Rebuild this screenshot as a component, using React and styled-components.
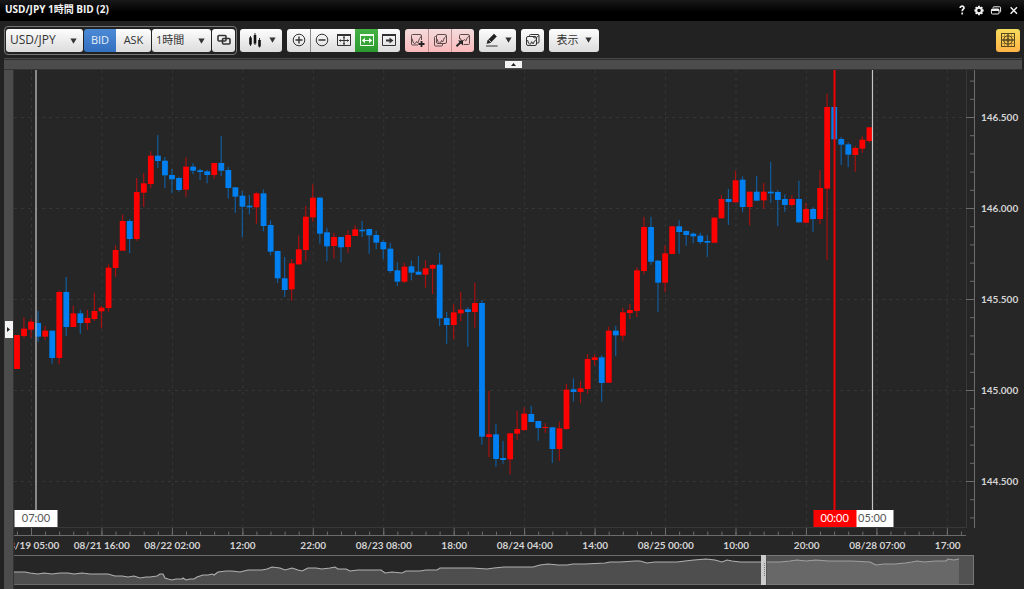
import React from "react";
import styled, { createGlobalStyle, css } from "styled-components";

const uiFont = `"Open Sans", "Noto Sans", "Noto Sans CJK JP", sans-serif`;
const chartFont = `Lato, "Noto Sans CJK JP", sans-serif`;

const GlobalStyle = createGlobalStyle`
  *, *::before, *::after { box-sizing: border-box; }
  body { margin: 0; background: #222; font-family: ${uiFont}; }
  button, select { font-family: inherit; margin: 0; border: 0; padding: 0; cursor: pointer; }
`;

const Window = styled.div`
  display: flex;
  flex-direction: column;
  min-height: 100vh;
  background: #222;
  overflow: hidden;
`;

const TitleBar = styled.header`
  display: flex;
  align-items: center;
  justify-content: space-between;
  height: 21px;
  padding: 0 5px;
  background: linear-gradient(#191919, #000 60%);
  border-bottom: 1px solid #000;
`;

const Title = styled.h1`
  margin: 0;
  padding-bottom: 2px;
  font: bold 10px/16px ${uiFont};
  color: #f4f4f4;
  white-space: nowrap;
`;

const WindowControls = styled.div`
  display: flex;
  gap: 5px;
`;

const WindowButton = styled.button`
  display: flex;
  width: 12px;
  height: 12px;
  background: none;
  color: #eee;
`;

const Toolbar = styled.div`
  display: flex;
  align-items: center;
  gap: 5px;
  height: 37px;
  padding: 1px 4px 0;
`;

const FrameGroup = styled.div`
  display: flex;
  align-items: center;
  gap: 1px;
  height: 29px;
  padding: 0 1px;
  margin-right: -2px;
  border: 1px solid #777;
  border-radius: 4px;
`;

const ButtonGroup = styled.div`
  display: flex;
  height: 23px;
  border-radius: 3px;
  overflow: hidden;
`;

const tones = {
  plain: css`background: linear-gradient(#fdfdfd, #dcdcdc); color: #333;`,
  blue: css`background: linear-gradient(#4b8ad6, #3470c0); color: #e8f0fa;`,
  green: css`background: linear-gradient(#45b045, #2a9a2e); color: #f0fff0;`,
  pink: css`background: linear-gradient(#f3dcdc, #fbb9bc); color: #5c4c4c;`,
  gold: css`background: linear-gradient(#f5dc5c, #ffb347); color: #5a4a20;`,
};

const ToolButton = styled.button`
  display: flex;
  align-items: center;
  justify-content: center;
  gap: 6px;
  width: ${(p) => p.$w}px;
  height: 23px;
  font-size: 11px;
  line-height: 16px;
  white-space: nowrap;
  ${(p) => tones[p.$tone || "plain"]}
  border-radius: ${(p) => (p.$joined ? 0 : 3)}px;

  ${ButtonGroup} > & + & { border-left: 1px solid ${(p) => (p.$tone === "pink" ? "#b98f90" : "#8a8a8a")}; }
`;

const SelectBox = styled.div`
  position: relative;
  width: ${(p) => p.$w}px;
  height: 23px;
`;

const Select = styled.select`
  display: block;
  appearance: none;
  width: 100%;
  height: 100%;
  padding: 0 20px 1px 4px;
  border-radius: 3px;
  font-size: ${(p) => p.$size}px;
  line-height: 16px;
  ${tones.plain}
`;

const SelectArrow = styled.span`
  position: absolute;
  right: 6px;
  top: 9px;
  pointer-events: none;
  display: flex;
`;

const Spacer = styled.div`
  flex: 1;
`;

const TopBand = styled.div`
  display: flex;
  align-items: center;
  justify-content: center;
  height: 12px;
  margin: 0 2px 0 4px;
  border-top: 1px solid #4a4a4a;
  border-bottom: 1px solid #333;
  background: #4c4c4c;
  box-shadow: inset 0 1px 0 #2c2c2c;
`;

const Body = styled.main`
  display: flex;
  flex: 1;
  min-height: 0;
  padding-left: 4px;
`;

const SideBand = styled.div`
  display: flex;
  align-items: center;
  justify-content: center;
  width: 10px;
  background: #4c4c4c;
  border-right: 1px solid #333;
`;

const CollapseTab = styled.button`
  display: flex;
  align-items: center;
  justify-content: center;
  width: ${(p) => (p.$side ? 8 : 17)}px;
  height: ${(p) => (p.$side ? 17 : 7)}px;
  background: #f4f4f4;
  color: #222;
`;

const ChartColumn = styled.div`
  display: flex;
  flex-direction: column;
  flex: 1;
  min-width: 0;
  background: #262626;
`;

const ChartRow = styled.div`
  display: flex;
  flex: 1;
`;

const Plot = styled.div`
  position: relative;
  flex: 1;
  min-width: 0;
`;

const PlotDrawing = styled.svg`
  display: block;
  width: 100%;
  height: 100%;
  min-height: 466px;
`;

const TimeFlag = styled.span`
  position: absolute;
  left: ${(p) => p.$at};
  bottom: 9px;
  width: 43px;
  height: 17px;
  transform: translateX(-50%);
  text-align: center;
  font: 11px/16px ${chartFont};
  background: ${(p) => (p.$alert ? "#f00" : "#fff")};
  color: ${(p) => (p.$alert ? "#fff" : "#555")};
  z-index: ${(p) => (p.$alert ? 1 : 0)};
`;

const axisText = css`
  font: bold 10px/16px ${chartFont};
  color: #d4d4d4;
  white-space: nowrap;
`;

const PriceAxis = styled.ol`
  display: grid;
  grid-template-rows: repeat(5, 1fr);
  width: 49px;
  margin: 0;
  padding: 1px 0 10px 6px;
  list-style: none;
  ${axisText}
`;

const PriceLabel = styled.li`
  display: flex;
  align-items: center;
`;

const TimeAxis = styled.div`
  margin-right: 49px;
  overflow: hidden;
`;

const TimeLabels = styled.ol`
  display: grid;
  grid-template-columns: repeat(14, minmax(0, 1fr));
  height: 19px;
  margin: 0 -8px 0 -18px;
  padding: 1px 0 0;
  list-style: none;
  ${axisText}
`;

const TimeLabel = styled.li`
  display: flex;
  justify-content: center;
`;

const Navigator = styled.div`
  height: 30px;
  margin: 0 50px 4px 0;
`;

const NavigatorDrawing = styled.svg`
  display: block;
  width: 100%;
  height: 100%;
`;

/* Each candle: direction, high, body top, body bottom, low (thirds of a plot unit). */
const candles = [
  ["u", 1005, 1005, 1107, 1107], ["u", 952, 986, 1008, 1015], ["u", 956, 965, 989, 1013],
  ["d", 933, 969, 1010, 1025], ["u", 978, 992, 1010, 1020], ["d", 992, 992, 1074, 1091],
  ["u", 872, 876, 1074, 1093], ["d", 831, 876, 981, 1008], ["u", 917, 940, 981, 981],
  ["d", 929, 940, 969, 1001], ["u", 930, 954, 969, 989], ["u", 878, 933, 957, 963],
  ["u", 917, 923, 934, 985], ["u", 793, 803, 924, 935], ["u", 736, 750, 804, 830],
  ["u", 644, 663, 752, 752], ["d", 658, 663, 717, 760], ["u", 534, 576, 717, 722],
  ["u", 520, 550, 578, 621], ["u", 454, 467, 552, 564], ["d", 405, 467, 483, 504],
  ["d", 471, 482, 526, 564], ["d", 507, 525, 538, 580], ["d", 530, 534, 570, 575],
  ["u", 472, 500, 569, 590], ["d", 490, 500, 512, 523], ["d", 506, 511, 516, 540],
  ["d", 510, 514, 525, 550], ["u", 489, 489, 525, 536], ["d", 408, 489, 512, 528],
  ["d", 501, 510, 564, 596], ["d", 561, 562, 590, 638], ["d", 573, 587, 620, 712],
  ["d", 585, 617, 622, 643], ["u", 577, 580, 622, 671], ["d", 568, 580, 678, 694],
  ["d", 661, 675, 755, 766], ["d", 752, 753, 835, 849], ["d", 771, 835, 870, 891],
  ["u", 777, 790, 868, 902], ["u", 706, 748, 793, 795], ["u", 618, 650, 750, 782],
  ["u", 553, 593, 652, 666], ["d", 591, 593, 701, 731], ["d", 683, 697, 739, 784],
  ["u", 698, 711, 738, 775], ["d", 711, 711, 742, 787], ["u", 691, 705, 741, 758],
  ["u", 676, 688, 708, 708], ["d", 663, 689, 694, 711], ["d", 686, 687, 706, 761],
  ["d", 692, 705, 728, 748], ["d", 721, 726, 748, 778], ["d", 728, 746, 813, 819],
  ["d", 787, 811, 845, 858], ["u", 788, 800, 845, 849], ["d", 782, 799, 818, 841],
  ["d", 768, 815, 824, 824], ["u", 781, 805, 824, 863], ["u", 792, 795, 806, 882],
  ["d", 758, 794, 955, 978], ["d", 935, 954, 975, 1031], ["u", 913, 937, 975, 1018],
  ["u", 876, 929, 940, 964], ["d", 922, 928, 936, 1040], ["u", 848, 909, 936, 983],
  ["d", 900, 909, 1310, 1334], ["u", 1173, 1303, 1311, 1372], ["d", 1273, 1303, 1377, 1400],
  ["d", 1323, 1374, 1380, 1391], ["u", 1299, 1300, 1378, 1423], ["u", 1233, 1287, 1301, 1320],
  ["u", 1222, 1241, 1290, 1293], ["d", 1217, 1242, 1266, 1266], ["d", 1262, 1263, 1284, 1322],
  ["u", 1270, 1281, 1284, 1298], ["d", 1281, 1282, 1347, 1389], ["u", 1265, 1285, 1347, 1382],
  ["u", 1152, 1169, 1287, 1289], ["d", 1135, 1168, 1176, 1205], ["u", 1142, 1165, 1176, 1210],
  ["u", 1062, 1077, 1167, 1181], ["u", 1062, 1072, 1080, 1097], ["d", 1066, 1072, 1149, 1205],
  ["u", 980, 992, 1148, 1148], ["d", 977, 992, 1006, 1068], ["u", 924, 937, 1007, 1022],
  ["u", 912, 930, 939, 957], ["u", 802, 811, 933, 951], ["u", 650, 681, 813, 823],
  ["d", 650, 681, 785, 794], ["d", 780, 782, 848, 937], ["u", 736, 760, 848, 877],
  ["u", 677, 679, 762, 762], ["d", 661, 679, 696, 761], ["d", 691, 693, 705, 737],
  ["d", 697, 701, 709, 730], ["d", 698, 707, 726, 733], ["d", 705, 723, 728, 771],
  ["u", 651, 653, 728, 730], ["u", 586, 597, 655, 655], ["d", 567, 597, 606, 675],
  ["u", 513, 541, 607, 607], ["d", 529, 539, 621, 636], ["u", 575, 575, 621, 676],
  ["d", 528, 575, 602, 602], ["u", 549, 575, 601, 626], ["d", 486, 575, 580, 608],
  ["d", 571, 576, 600, 679], ["d", 583, 597, 615, 636], ["u", 586, 597, 615, 620],
  ["d", 542, 597, 667, 667], ["u", 609, 627, 668, 670], ["d", 622, 627, 657, 696],
  ["u", 510, 564, 657, 672], ["u", 281, 321, 566, 780], ["d", 321, 321, 418, 418],
  ["d", 411, 417, 434, 495], ["d", 427, 433, 464, 502], ["u", 438, 444, 465, 515],
  ["u", 409, 419, 446, 458], ["u", 382, 382, 423, 428],
];

const candleStep = 7.045;
const candleX = (i) => 16.9 + i * candleStep;
const majorX = Array.from({ length: 14 }, (_, i) => 31.5 + i * 10 * candleStep);
const minorX = Array.from({ length: 68 }, (_, i) => 17.4 + i * 2 * candleStep);
const majorY = [117.5, 208.5, 299.5, 390.5, 481.5];
const minorY = Array.from({ length: 25 }, (_, i) => 81.1 + i * 18.2);

const times = ["08/19 05:00", "08/21 16:00", "08/22 02:00", "12:00", "22:00", "08/23 08:00", "18:00",
  "08/24 04:00", "14:00", "08/25 00:00", "10:00", "20:00", "08/28 07:00", "17:00"];
const prices = ["146.500", "146.000", "145.500", "145.000", "144.500"];

const overview = "14,572 25,572 30,573 38,574 44,573 52,574 60,573 68,573 74,574 82,573 90,574 100,574 108,574 115,576 122,576 128,577 134,576 140,578 146,577 150,577 157,576 160,574 163,574 165,578 168,579 172,580 176,579 182,579 183,578 186,580 190,579 194,579 197,577 203,575 208,575 212,574 214,575 218,572 226,571 232,571 240,572 248,570 262,570 267,569 272,567 280,568 285,570 292,568 298,570 302,571 308,568 316,568 322,569 330,568 335,567 338,569 346,569 350,571 358,570 368,570 381,570 385,573 392,572 402,573 406,571 412,571 420,571 426,570 437,570 440,568 450,568 458,568 466,568 472,568 487,569 494,568 504,567 515,567 533,567 540,565 548,564 558,565 567,565 573,564 585,564 605,563 610,562 620,562 635,561 640,561 647,563 655,562 677,562 685,561 694,560 706,559 715,560 722,562 727,560 732,561 740,562 750,562 764,562 780,562 790,561 797,560 806,561 816,560 828,561 844,561 852,561 870,562 876,565 884,564 895,564 905,563 912,562 917,561 924,562 936,561 946,561 948,559 954,560 959,559";

const icon = { fill: "none", stroke: "currentColor", strokeWidth: 1 };

const Arrow = () => (
  <svg width="7" height="6" viewBox="0 0 7 6" aria-hidden="true"><path d="M0.4 0.4h6.2L3.5 5.8z" fill="#333" /></svg>
);

const Icon = ({ w = 16, h = 16, children }) => (
  <svg width={w} height={h} viewBox={`0 0 ${w} ${h}`} aria-hidden="true" {...icon}>{children}</svg>
);

const FrameArt = ({ children }) => (
  <Icon>
    <path d="M1.500 3V13.500H14.500V3" />
    <path d="M1 3h14" strokeWidth="2" />
    {children}
  </Icon>
);

function TitleStrip() {
  return (
    <TitleBar>
      <Title>USD/JPY 1時間 BID (2)</Title>
      <WindowControls>
        <WindowButton aria-label="ヘルプ">
          <Icon w={12} h={12}><path d="M4.2 3.9c0-2.4 4-2.3 3.8 0-.1 1.4-1.8 1.3-1.8 3.3M6.2 8.6v2" strokeWidth="1.7" /></Icon>
        </WindowButton>
        <WindowButton aria-label="設定">
          <Icon w={12} h={12}>
            <circle cx="6" cy="6.5" r="2.8" strokeWidth="2" />
            <path d="M6 1.8v2M6 9.2v2M1.3 6.5h2M8.7 6.5h2M2.7 3.2l1.2 1.2M8.1 8.6l1.2 1.2M2.7 9.8l1.2-1.2M8.1 4.4l1.2-1.2" strokeWidth="1.9" />
          </Icon>
        </WindowButton>
        <WindowButton aria-label="元のサイズに戻す">
          <Icon w={12} h={12}>
            <path d="M3 3.8q0-1 1-1h5.6q1 0 1 1v3.6q0 1-1 1" />
            <rect x="1.4" y="5" width="7.6" height="5" rx="1" />
            <path d="M1.4 6h7.6" strokeWidth="2" />
          </Icon>
        </WindowButton>
        <WindowButton aria-label="閉じる">
          <Icon w={12} h={12}><path d="M3.600 3.2l6.4 6.6M10 3.2L3.600 9.8" strokeWidth="1.5" /></Icon>
        </WindowButton>
      </WindowControls>
    </TitleBar>
  );
}

function Tools() {
  return (
    <Toolbar>
      <FrameGroup>
        <SelectBox $w={77}>
          <Select $size={12} aria-label="通貨ペア"><option>USD/JPY</option></Select>
          <SelectArrow><Arrow /></SelectArrow>
        </SelectBox>
        <ButtonGroup>
          <ToolButton $w={32} $tone="blue" $joined>BID</ToolButton>
          <ToolButton $w={35} $joined>ASK</ToolButton>
        </ButtonGroup>
        <SelectBox $w={59}>
          <Select $size={11} aria-label="足種"><option>1時間</option></Select>
          <SelectArrow><Arrow /></SelectArrow>
        </SelectBox>
        <ToolButton $w={23} aria-label="連動">
          <Icon>
            <rect x="2" y="3.500" width="8" height="5.500" rx="1" strokeWidth="1.600" />
            <rect x="6.500" y="6.500" width="7.500" height="5.500" rx="1" strokeWidth="1.600" />
          </Icon>
        </ToolButton>
      </FrameGroup>
      <ToolButton $w={42} aria-label="チャート種類">
        <Icon w={16}>
          <path d="M3.500 4v10M8 1v12M12.500 6v9.500" strokeWidth="1" />
          <path d="M3.500 5.500v7M8 3v8.500M12.500 8v6.500" strokeWidth="2.600" stroke="#111" />
        </Icon>
        <Arrow />
      </ToolButton>
      <ButtonGroup>
        <ToolButton $w={23} $joined aria-label="拡大">
          <Icon><circle cx="8" cy="8" r="5.800" /><path d="M4.500 8h7M8 4.500v7" strokeWidth="1.400" /></Icon>
        </ToolButton>
        <ToolButton $w={23} $joined aria-label="縮小">
          <Icon><circle cx="8" cy="8" r="5.800" /><path d="M4.500 8h7" strokeWidth="1.400" /></Icon>
        </ToolButton>
        <ToolButton $w={22} $joined aria-label="全体表示">
          <FrameArt>
            <path d="M3 8.500h10M8 4v9" />
            <path d="M5 7L3.200 8.500 5 10zM11 7l1.800 1.500L11 10zM6.800 6.200L8 4.800l1.200 1.400zM6.800 11L8 12.400 9.200 11z" fill="currentColor" stroke="none" />
          </FrameArt>
        </ToolButton>
        <ToolButton $w={23} $tone="green" $joined aria-label="幅に合わせる">
          <FrameArt>
            <path d="M4 8.500h8" strokeWidth="1.200" />
            <path d="M6 5.800L2.800 8.500 6 11.200zM10 5.800l3.200 2.700L10 11.200z" fill="currentColor" stroke="none" />
          </FrameArt>
        </ToolButton>
        <ToolButton $w={22} $joined aria-label="最新へ移動">
          <FrameArt>
            <path d="M5 8.500h4" strokeWidth="2" />
            <path d="M8.500 5.500l4 3-4 3z" fill="currentColor" stroke="none" />
          </FrameArt>
        </ToolButton>
      </ButtonGroup>
      <ButtonGroup>
        <ToolButton $w={23} $tone="pink" $joined aria-label="テクニカル追加">
          <Icon>
            <path d="M12.500 8V4q0-1.500-1.500-1.500H3.500q-1 0-1 1V12q0 1 1 1H9" />
            <path d="M3 6.500q1 4.500 2.300 5T7.600 9.500l1.200 1.600Q10.500 5.500 12.500 4" />
            <path d="M9.500 12h6M12.500 9v6" strokeWidth="1.800" stroke="#222" />
          </Icon>
        </ToolButton>
        <ToolButton $w={23} $tone="pink" $joined aria-label="テクニカル一覧">
          <Icon>
            <rect x="4.500" y="2.500" width="10" height="9" rx="1.500" />
            <path d="M4.500 4.500h-1q-1 0-1 1V13q0 1 1 1H9.500q1 0 1-1v-1.500" />
            <path d="M5 7q1 3.500 2.400 4T9.500 8.500l1.200 1.500Q12 5 14.300 4" />
          </Icon>
        </ToolButton>
        <ToolButton $w={23} $tone="pink" $joined aria-label="テクニカル設定">
          <Icon>
            <path d="M4.500 7V3.500q0-1 1-1H13q1.500 0 1.500 1.500v7.500q0 1-1 1H8.500" />
            <path d="M5 6q1 3 2.800 3L9.500 7.500l1.200 1.500Q12 5 14.300 4" />
            <path d="M1.500 14.200L5.500 10.500" strokeWidth="1.900" stroke="#222" />
            <path d="M3 8.500h5v5z" fill="#222" stroke="none" />
          </Icon>
        </ToolButton>
      </ButtonGroup>
      <ToolButton $w={37} aria-label="描画ツール">
        <Icon w={15}>
          <path d="M2.500 11.800l1.200-3.600L10 1.800l2.800 2.600L6.400 10.900z" fill="#222" stroke="none" />
          <path d="M2 14h11.500" />
          <path d="M4.500 7.600l2.500 2.500" stroke="#eee" strokeWidth="0.800" />
        </Icon>
        <Arrow />
      </ToolButton>
      <ToolButton $w={23} aria-label="チャート複製">
        <Icon>
          <path d="M4.500 4.500V3.500q0-1 1-1H13q1 0 1 1V10q0 1-1 1h-1" />
          <rect x="1.500" y="4.500" width="10" height="9" rx="1.500" />
          <path d="M2.500 8q1 4 2.200 4.300T6.600 9.700l1.500 2.200Q9.500 8 11.500 7.500M7.500 4.500Q10 7 11.500 5.500T14 3.500" />
        </Icon>
      </ToolButton>
      <ToolButton $w={50}>表示 <Arrow /></ToolButton>
      <Spacer />
      <ToolButton $w={24} $tone="gold" aria-label="クロスライン">
        <Icon>
          <rect x="1.500" y="1.500" width="13" height="13" />
          <circle cx="8" cy="8" r="4.300" />
          <path d="M8 1.500v13M1.500 8h13" strokeWidth="1.300" />
          <path d="M1.500 4.500h13M1.500 11.500h13M4.500 1.500v13M11.500 1.500v13" strokeWidth="0.400" />
          <circle cx="8" cy="8" r="1.500" strokeWidth="0.800" />
        </Icon>
      </ToolButton>
    </Toolbar>
  );
}

function CandleChart() {
  return (
    <PlotDrawing viewBox="14 70 961 466" preserveAspectRatio="none" role="img" aria-label="USD/JPY 1時間足">
      <g stroke="#363636" strokeWidth="1" strokeDasharray="3 4">
        {majorX.map((x) => <path key={x} d={`M${x} 70V528`} />)}
        {majorY.map((y) => <path key={y} d={`M14 ${y}H966`} />)}
      </g>
      <path d="M966.500 70V528M14 527.500H966" stroke="#383838" fill="none" />
      <g stroke="#6c6c6c" fill="none">
        <path d="M974.500 70V528M14 535.500H966" />
        {minorY.map((y) => <path key={y} d={`M970 ${y}H974`} />)}
        {majorY.map((y) => <path key={y} d={`M966 ${y}H974`} />)}
        {minorX.map((x) => <path key={x} d={`M${x} 531.500V535`} />)}
        {majorX.map((x) => <path key={x} d={`M${x} 528V535`} />)}
      </g>
      <clipPath id="closed"><rect x="14" y="70" width="858.500" height="458" /></clipPath>
      <g clipPath="url(#closed)">
        {candles.map(([dir, high, top, bottom, low], i) => {
          const x = candleX(i);
          const color = dir === "u" ? "#ff0000" : "#0080f0";
          return (
            <g key={i}>
              <path d={`M${x} ${high / 3}V${low / 3}`} stroke={color} strokeWidth="1.200" opacity="0.600" />
              <rect x={x - 2.8} y={top / 3} width="5.8" height={Math.max((bottom - top) / 3, 1)} fill={color} />
            </g>
          );
        })}
      </g>
      <path d="M36 70V511" stroke="#b4b4b4" strokeWidth="1.400" />
      <path d="M834.500 70V511" stroke="#ee0000" strokeWidth="2" />
      <path d="M872.500 70V511" stroke="#c4c4c4" strokeWidth="1.200" />
    </PlotDrawing>
  );
}

function Overview() {
  return (
    <Navigator>
      <NavigatorDrawing viewBox="14 555 960 30" preserveAspectRatio="none" role="img" aria-label="表示範囲">
        <path d={`M14,584 L${overview} L959,584z`} fill="#4e4e4e" />
        <polyline points={overview} fill="none" stroke="#b0b0b0" strokeWidth="1.100" />
        <path d="M14 555.500H974M14 584.500H974M973.500 555V585" stroke="#6a6a6a" fill="none" />
        <rect x="767" y="555" width="207" height="30" fill="#8a8a8a" opacity="0.450" />
        <rect x="761" y="555" width="5" height="30" fill="#ccc" />
        <path d="M764.500 563V577" stroke="#777" strokeDasharray="1 1" />
        <path d="M766.500 555V585" stroke="#555" />
      </NavigatorDrawing>
    </Navigator>
  );
}

export default function App() {
  return (
    <Window>
      <GlobalStyle />
      <TitleStrip />
      <Tools />
      <TopBand>
        <CollapseTab aria-label="ツールバーを隠す">
          <svg width="5" height="3" viewBox="0 0 5 3"><path d="M0 3L2.500 0 5 3z" fill="currentColor" /></svg>
        </CollapseTab>
      </TopBand>
      <Body>
        <SideBand>
          <CollapseTab $side aria-label="サイドパネルを開く">
            <svg width="3" height="5" viewBox="0 0 3 5"><path d="M0 0L3 2.500 0 5z" fill="currentColor" /></svg>
          </CollapseTab>
        </SideBand>
        <ChartColumn>
          <ChartRow>
            <Plot>
              <CandleChart />
              <TimeFlag $at="22px">07:00</TimeFlag>
              <TimeFlag $at="85.4%" $alert>00:00</TimeFlag>
              <TimeFlag $at="89.3%">05:00</TimeFlag>
            </Plot>
            <PriceAxis>
              {prices.map((price) => <PriceLabel key={price}>{price}</PriceLabel>)}
            </PriceAxis>
          </ChartRow>
          <TimeAxis>
            <TimeLabels>
              {times.map((time) => <TimeLabel key={time}>{time}</TimeLabel>)}
            </TimeLabels>
          </TimeAxis>
          <Overview />
        </ChartColumn>
      </Body>
    </Window>
  );
}
